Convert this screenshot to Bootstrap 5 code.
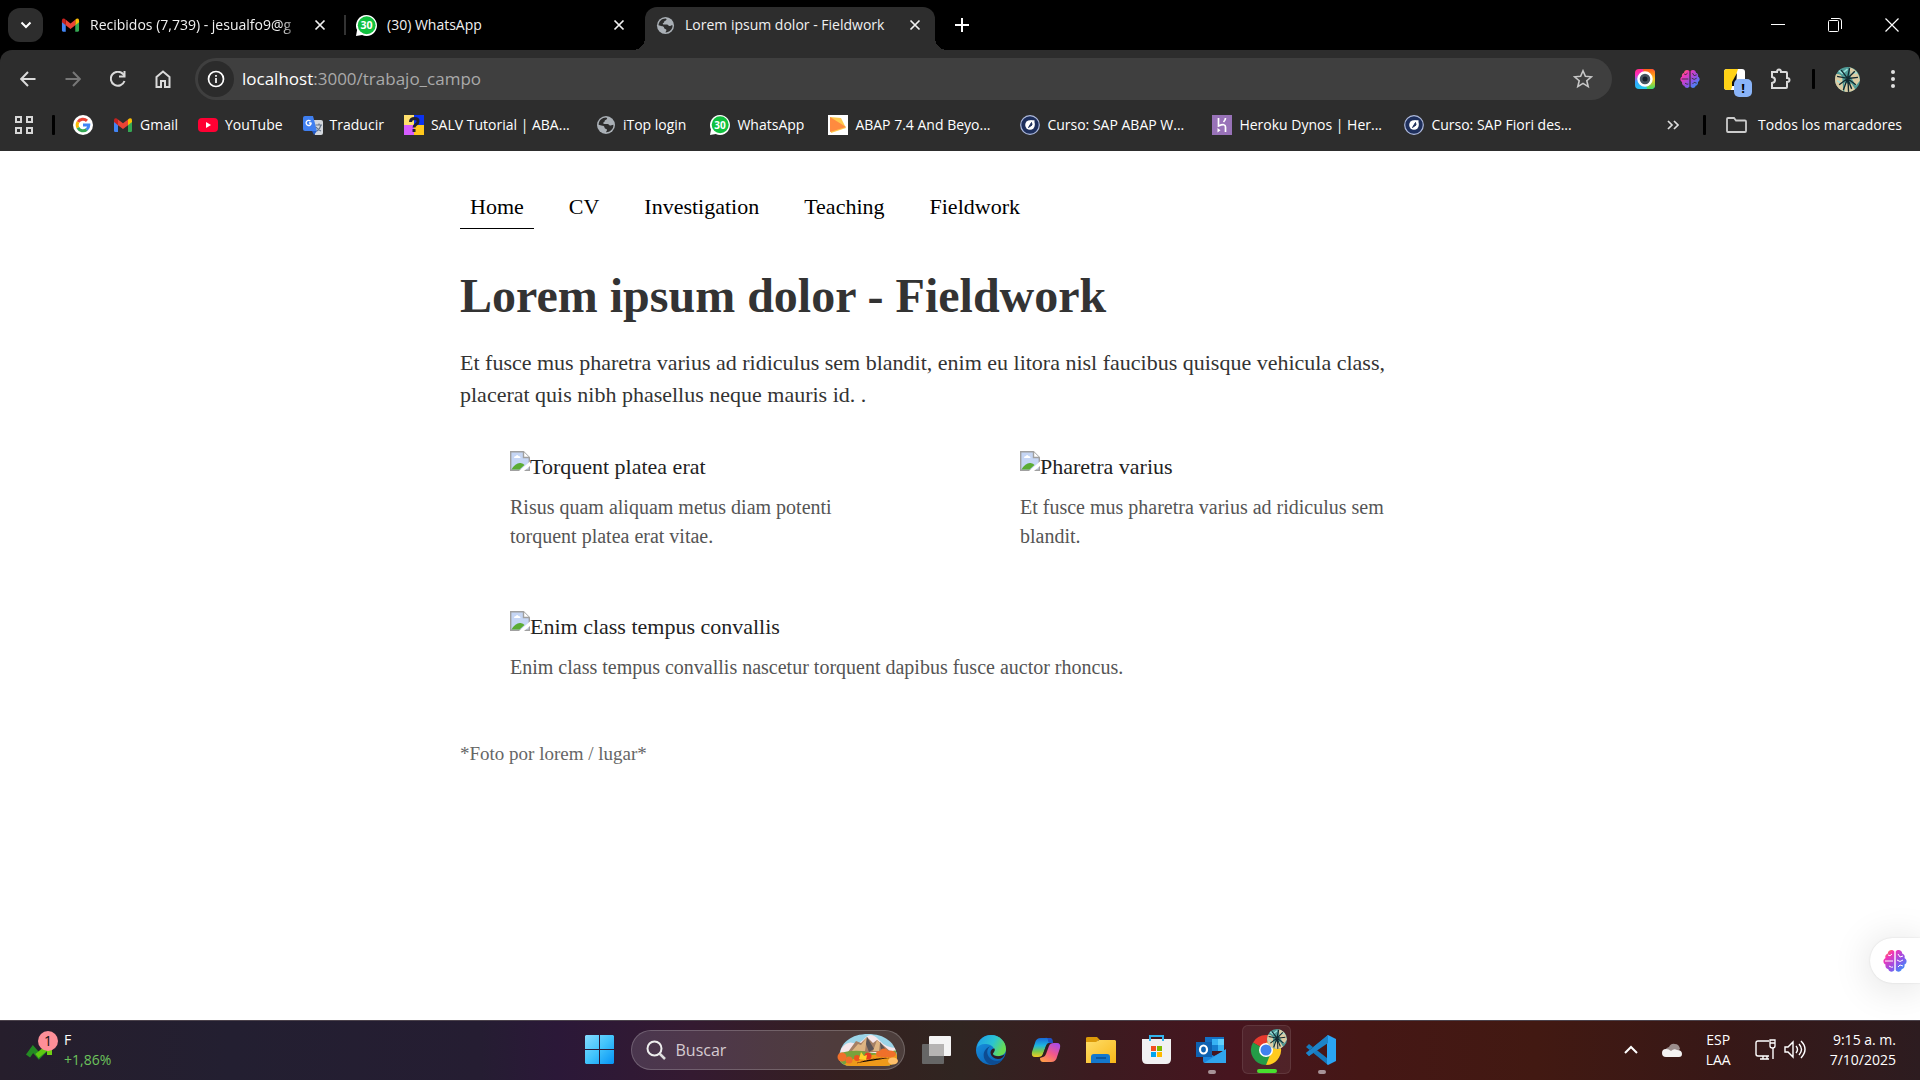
<!DOCTYPE html>
<html lang="es" data-bs-theme="light">
<head>
<meta charset="utf-8">
<meta name="viewport" content="width=device-width, initial-scale=1">
<title>Lorem ipsum dolor - Fieldwork</title>
<link href="https://cdn.jsdelivr.net/npm/bootstrap@5.3.0/dist/css/bootstrap.min.css" rel="stylesheet">
<style>
  body { font-family: "Open Sans", "Noto Sans", sans-serif; font-size: 14px; line-height: 20px; background: #fff; }
  svg { display: block; flex: none; }
  .plain { border: 0; background: none; padding: 0; color: inherit; display: flex; align-items: center; justify-content: center; flex: none; }

  /* browser window */
  .tabstrip { height: 50px; background: #000; color: #f1f1f1; }
  .tab-search { width: 35px; height: 34px; border-radius: 12px; background: #2d2d2d; margin: 0 8px; }
  .tab-item { width: 293px; height: 36px; padding: 0 14px 0 10px; gap: 10px; }
  .tab-item a { color: inherit; }
  .tab-divider { width: 2px; height: 20px; background: #333; }
  .tab-fade { -webkit-mask-image: linear-gradient(90deg, #000 190px, transparent 212px); mask-image: linear-gradient(90deg, #000 190px, transparent 212px); }
  .tab-current { width: 290px; height: 43px; padding-bottom: 7px; padding-left: 11px; margin-left: 6px; background: #2d2d2d; border-radius: 12px 12px 0 0; position: relative; align-self: flex-end; }
  .tab-current::before, .tab-current::after { content: ""; position: absolute; bottom: 0; width: 12px; height: 12px; }
  .tab-current::before { left: -12px; background: radial-gradient(circle at 0 0, transparent 12px, #2d2d2d 12px); }
  .tab-current::after { right: -12px; background: radial-gradient(circle at 100% 0, transparent 12px, #2d2d2d 12px); }
  .win-btn { width: 57px; height: 50px; }

  .chrome-bars { background: #000; color: #fff; }
  .chrome-inner { background: #2d2d2d; border-radius: 12px 12px 0 0; }
  .toolbar-row { height: 58px; padding: 0 5px; }
  .tool-btn { width: 45px; height: 42px; color: #dadada; }
  .tool-btn.dim { color: #777; }
  .omnibox { height: 42px; border-radius: 21px; background: #3f3f3f; margin-left: 10px; padding: 0 19px 0 3px; }
  .site-info { width: 36px; height: 36px; border-radius: 50%; background: #2b2b2b; }
  .url { font-size: 17px; color: #aaa; background: none; border: 0; outline: 0; }
  .url b { font-weight: 400; color: #fff; }
  .extensions { margin-left: 10px; }
  .bar-divider { width: 3px; height: 20px; background: #000; border-radius: 1px; flex: none; }
  .extensions .bar-divider { margin: 0 10px; }
  .bookmarks { height: 43px; padding: 0 18px 9px 14px; }
  .bookmarks .bar-divider { margin: 0 18px; }
  .bookmarks a { color: #fff; text-decoration: none; white-space: nowrap; gap: 7px; display: flex; align-items: center; margin-right: 20px; }
  .bookmarks a.roomy-mark { margin-right: 24px; }
  .bookmarks a.wide-mark { width: 177px; margin-right: 15px; }
  .ext-badge { position: absolute; left: 22px; top: 21px; width: 18px; height: 18px; border-radius: 5px; background: #8ab4f8; color: #000; font-size: 13px; line-height: 18px; font-weight: 700; text-align: center; }

  /* site */
  .site { font-family: "Liberation Serif", serif; font-size: 22px; line-height: 32px; color: #333; padding-top: 35px; }
  .site-body { max-width: 1000px; margin: 0 auto; }
  .site-nav { gap: 25px; margin-bottom: 35px; }
  .site-nav a { color: #000; text-decoration: none; padding: 5px 10px; border-bottom: 1px solid transparent; }
  .site-nav a.here { border-color: #000; }
  .site h1 { font-size: 48px; line-height: 64px; font-weight: 700; margin-bottom: 19px; color: #333; }
  .gallery { display: grid; grid-template-columns: 1fr 1fr; gap: 20px; }
  .gallery figure { margin: 20px 50px; }
  .gallery figcaption { margin-top: 10px; font-size: 20px; line-height: 29px; color: #555; }
  .span-two { grid-column: span 2; }
  .alt { color: #222; }
  .credit { font-size: 19px; line-height: 27px; color: #666; margin-top: 38px; }
  .brain-tab { position: absolute; right: 0; bottom: 37px; width: 50px; height: 45px; border-radius: 23px 0 0 23px; background: #fff; box-shadow: 0 4px 40px rgba(0,0,0,.14), 0 0 2px rgba(0,0,0,.12); }

  /* taskbar */
  .taskbar { height: 60px; padding-bottom: 2px; color: #fff; border-top: 1px solid #4b424b;
    background: linear-gradient(90deg, #261e2c 0, #231f31 12%, #251d32 25%, #2b1838 29%, #341a31 36%, #35201f 44%, #302521 50%, #3c1b20 57%, #46151f 64%, #451715 71%, #421912 80%, #371817 90%, #2d1c20 100%); }
  .taskbar > .side { flex: 1 1 0; padding: 0 24px; }
  .count { position: absolute; left: 14px; top: -9px; width: 20px; height: 20px; border-radius: 50%; background: #fd8f98; color: #111; font-size: 14px; line-height: 20px; text-align: center; }
  .gain { color: #6cc35c; }
  .find { width: 274px; height: 40px; border: 1px solid rgba(255,255,255,.2); border-radius: 20px; background: rgba(255,255,255,.13); padding: 0 6px 0 14px; margin: 0 4px; }
  .find input { background: none; border: 0; outline: 0; color: #d5cbd1; font-size: 16px; min-width: 0; }
  .find input::placeholder { color: #d5cbd1; opacity: 1; }
  .app { width: 49px; height: 49px; margin: 0 3px; border-radius: 6px; position: relative; }
  .app.active { background: rgba(255,255,255,.06); border: 1px solid rgba(255,255,255,.09); }
  .app.open::after, .app.active::after { content: ""; position: absolute; bottom: 0; left: 21px; width: 8px; height: 4px; border-radius: 2px; background: #a79398; }
  .app.active::after { left: 14px; width: 20px; background: #48e02e; }
</style>
<script src="https://cdn.jsdelivr.net/npm/bootstrap@5.3.0/dist/js/bootstrap.bundle.min.js"></script>
</head>
<body class="vh-100 d-flex flex-column overflow-hidden">

<svg width="0" height="0" class="position-absolute" aria-hidden="true">
  <defs>
    <linearGradient id="gBrain" x1="0" y1="0" x2="1" y2="1"><stop offset="0" stop-color="#ffa318"/><stop offset=".25" stop-color="#f435b5"/><stop offset=".6" stop-color="#9052e8"/><stop offset="1" stop-color="#18a8ff"/></linearGradient>
    <linearGradient id="gWin" x1="0" y1="0" x2="1" y2="1"><stop offset="0" stop-color="#86dcff"/><stop offset=".5" stop-color="#41c3fb"/><stop offset="1" stop-color="#0593f5"/></linearGradient>
    <linearGradient id="gEdgeA" x1="0" y1="0" x2="1" y2=".4"><stop offset="0" stop-color="#1e9bea"/><stop offset=".6" stop-color="#2bc4d2"/><stop offset="1" stop-color="#66dd55"/></linearGradient>
    <linearGradient id="gEdgeB" x1="0" y1="0" x2=".7" y2="1"><stop offset="0" stop-color="#1a98e5"/><stop offset="1" stop-color="#0a5fb4"/></linearGradient>
    <linearGradient id="gCopA" x1="0" y1="0" x2="0" y2="1"><stop offset="0" stop-color="#1669d8"/><stop offset=".4" stop-color="#1eb4e0"/><stop offset=".7" stop-color="#79c94c"/><stop offset="1" stop-color="#f5cb24"/></linearGradient>
    <linearGradient id="gCopB" x1=".8" y1="0" x2=".2" y2="1"><stop offset="0" stop-color="#a84bea"/><stop offset=".5" stop-color="#f2588a"/><stop offset="1" stop-color="#ff9c47"/></linearGradient>
    <linearGradient id="gFold" x1="0" y1="0" x2="1" y2="1"><stop offset="0" stop-color="#ffdd68"/><stop offset="1" stop-color="#f8b718"/></linearGradient>
    <linearGradient id="gRain" x1="0" y1="0" x2=".3" y2="1"><stop offset="0" stop-color="#ff2b7c"/><stop offset=".3" stop-color="#ff2bc1"/><stop offset=".6" stop-color="#33a5ff"/><stop offset="1" stop-color="#22c8ee"/></linearGradient>
    <linearGradient id="gRain2" x1="0" y1="0" x2="0" y2="1"><stop offset="0" stop-color="#ff5a1c"/><stop offset=".5" stop-color="#ffc41c"/><stop offset="1" stop-color="#3fdc62"/></linearGradient>
    <symbol id="gmail" viewBox="0 0 20 16"><path fill="#4285f4" d="M1 3.500v10.300Q1 15 2.200 15H5V7z"/><path fill="#34a853" d="M19 3.500v10.300Q19 15 17.800 15H15V7z"/><path fill="#fbbc04" d="M15 2.500 16.200 1.500Q19 .3 19 3.500V5l-4 3.200z"/><path fill="#ea4335" d="M5 2.500 10 6.300l5-3.800v5.700l-5 3.900-5-3.900z"/><path fill="#c5221f" d="M5 2.500 3.800 1.500Q1 .3 1 3.500V5l4 3.200z"/></symbol>
    <symbol id="whats" viewBox="0 0 20 20"><path fill="#fff" d="M10 0a10 10 0 1 1-4.200 19.100L0 20l1-5.600A10 10 0 0 1 10 0z"/><circle cx="10.200" cy="9.800" r="8.500" fill="#11c13f"/><text x="10" y="13.500" font-family="Open Sans, sans-serif" font-size="10" font-weight="700" fill="#fff" text-anchor="middle">30</text></symbol>
    <symbol id="globe" viewBox="0 0 20 20"><circle cx="10" cy="10" r="9" fill="#aab0b6"/><path fill="#2d2d2d" d="M10 2.500c2 .2 1 2-.5 2.500-1.500.6-.3 2-1.800 2.300-1 .3-.6 1.700.8 1.700h3c1.500 0 1.500 1.500 2.500 1.600 1.200.1 1.500-.8 3.400-.8.4 4.200-3.700 7.700-7.400 7.500.2-1.300 1.300-1.500.9-2.800-.4-1-2.400-.5-2.400-2.100 0-1.200-.9-1.700-2.200-1.700L2.600 9.800C2.800 5.500 6 2.500 10 2.500z"/><circle cx="14" cy="6.800" r="2.200" fill="#aab0b6"/></symbol>
    <symbol id="curso" viewBox="0 0 20 20"><circle cx="10" cy="10" r="9.300" fill="#1e2f5c" stroke="#aebadd" stroke-width="1.200"/><circle cx="10" cy="10" r="4.800" fill="#fff"/><path d="M10 5.200h4.500V10z" fill="#fff"/><path d="M8.500 12.500 11.500 7.500 12 10z" fill="#1e2f5c" stroke="#1e2f5c"/></symbol>
    <symbol id="brain" viewBox="0 0 24 24"><path fill="url(#gBrain)" d="M11.300 2.500C9-.3 4.700 1.400 4.800 4.500 2 5.500 2 8 2.500 9c-3 1.500-2.500 5.500 0 6.500-.5 3 1 4.500 2.700 4.500.8 3.300 5 3.500 6.100 1zM12.700 2.500C15-.3 19.300 1.400 19.200 4.500 22 5.500 22 8 21.500 9c3 1.500 2.500 5.500 0 6.500.5 3-1 4.500-2.700 4.500-.8 3.300-5 3.500-6.100 1z"/><path d="M5 6q2 2 4-1M2 12h8M6 17q3 2 4 1M15 5l2 3 3-1M14 11q3 3 6 0M15 18l2-2 3 1" fill="none" stroke="currentColor"/></symbol>
    <symbol id="broken" viewBox="0 0 20 20"><path d="M.7.7h12.800l5.800 5.800v12.800H.7z" fill="#c5d6f5" stroke="#a0a0a0" stroke-width="1.400"/><path d="M13.500.7v5.800h5.800" fill="#fff" stroke="#a0a0a0" stroke-width="1.400"/><path d="M4 7q0-2 2-2 1-2 2.500 0 2 0 2 2z" fill="#fff"/><path d="M1.500 18.500q4-7 9-6.500 3 .5 4 2l-5 4.500z" fill="#5aac34"/><path d="M20 10.500v4.500L14 20H9z" fill="#fff"/></symbol>
    <symbol id="close" viewBox="0 0 12 12"><path d="M1.500 1.500l9 9m0-9l-9 9" stroke="currentColor" stroke-width="1.700"/></symbol>
    <clipPath id="cRound"><circle cx="12" cy="12" r="12"/></clipPath>
    <symbol id="palm" viewBox="0 0 24 24"><g clip-path="url(#cRound)"><path d="M0 0h24v24H0z" fill="#4f9c98"/><path d="M0 7q5-1 7 3l1 14H0zM14 0q9 3 10 13l-4 5-5-9zM9 15l7 1 5 8H9z" fill="#dccca4"/><path d="M3 3l4 3 5-4M17 5l4 1M2 13l3 2" stroke="#9be0da" stroke-width="1.500" fill="none"/><path d="M13 24q0-7-1-12M12 11 2 9m10 2L6 3m6 8 2-10m-2 10 7-7m-7 7 10-1m-10 1 8 6m-8-6-8 6m8-6 4 10m-4-10-4 11" fill="none" stroke="#132a31" stroke-width="1.300"/></g></symbol>
  </defs>
</svg>

<header>
  <div class="tabstrip d-flex align-items-center">
    <button class="plain tab-search" aria-label="Buscar pestañas"><svg width="12" height="8" viewBox="0 0 12 8"><path d="M1.500 1.500 6 6l4.500-4.500" fill="none" stroke="#fff" stroke-width="2"/></svg></button>
    <div class="tab-item d-flex align-items-center">
      <svg width="19" height="16"><use href="#gmail"/></svg>
      <a href="#" class="flex-grow-1 text-decoration-none text-nowrap tab-fade">Recibidos (7,739) - jesualfo9@g</a>
      <button class="plain me-1" aria-label="Cerrar"><svg width="12" height="12"><use href="#close"/></svg></button>
    </div>
    <div class="tab-divider"></div>
    <div class="tab-item d-flex align-items-center">
      <svg width="21" height="21"><use href="#whats"/></svg>
      <a href="#" class="flex-grow-1 text-decoration-none text-nowrap">(30) WhatsApp</a>
      <button class="plain" aria-label="Cerrar"><svg width="12" height="12"><use href="#close"/></svg></button>
    </div>
    <div class="tab-item tab-current d-flex align-items-center">
      <svg width="19" height="19"><use href="#globe"/></svg>
      <a href="#" class="flex-grow-1 text-decoration-none text-nowrap">Lorem ipsum dolor - Fieldwork</a>
      <button class="plain" aria-label="Cerrar"><svg width="12" height="12"><use href="#close"/></svg></button>
    </div>
    <button class="plain ms-3 px-1" aria-label="Nueva pestaña"><svg width="14" height="14" viewBox="0 0 14 14"><path d="M7 0v14M0 7h14" stroke="#fff" stroke-width="2"/></svg></button>
    <div class="ms-auto d-flex">
      <button class="plain win-btn" aria-label="Minimizar"><svg width="14" height="14" viewBox="0 0 14 14"><path d="M0 6.500h14" stroke="#fff"/></svg></button>
      <button class="plain win-btn" aria-label="Restaurar"><svg width="14" height="14" viewBox="0 0 14 14"><rect x=".5" y="2.500" width="10" height="11" rx="1" fill="none" stroke="#fff"/><path d="M3 .5h8q2.500 0 2.500 2.500v8" fill="none" stroke="#fff"/></svg></button>
      <button class="plain win-btn" aria-label="Cerrar ventana"><svg width="14" height="14" viewBox="0 0 14 14"><path d="M.5.500l13 13m0-13l-13 13" stroke="#fff" stroke-width="1.200"/></svg></button>
    </div>
  </div>

  <div class="chrome-bars"><div class="chrome-inner">
    <div class="toolbar-row d-flex align-items-center">
      <button class="plain tool-btn" aria-label="Atrás"><svg width="16" height="16" viewBox="0 0 16 16"><path d="M15.500 8H1.500M8 1 1.200 8 8 15" fill="none" stroke="currentColor" stroke-width="2"/></svg></button>
      <button class="plain tool-btn dim" aria-label="Adelante"><svg width="16" height="16" viewBox="0 0 16 16"><path d="M.5 8h14M8 1l6.800 7L8 15" fill="none" stroke="currentColor" stroke-width="2"/></svg></button>
      <button class="plain tool-btn" aria-label="Recargar"><svg width="16" height="16" viewBox="0 0 16 16"><path d="M14.500 10A7 7 0 1 1 13 3l1.500 2" fill="none" stroke="currentColor" stroke-width="2"/><path d="M15.500 0v6.500H9v-2h4.500V0z" fill="currentColor"/></svg></button>
      <button class="plain tool-btn" aria-label="Inicio"><svg width="16" height="18" viewBox="0 0 16 18"><path d="M1.500 17V7L8 1.500 14.500 7v10H10v-6H6v6z" fill="none" stroke="currentColor" stroke-width="2"/></svg></button>
      <div class="omnibox flex-grow-1 d-flex align-items-center">
        <button class="plain site-info" aria-label="Información del sitio"><svg width="18" height="18" viewBox="0 0 18 18"><circle cx="9" cy="9" r="7.500" fill="none" stroke="#fff" stroke-width="1.700"/><path d="M9 8v5M9 5v1.800" stroke="#fff" stroke-width="1.700"/></svg></button>
        <div class="url flex-grow-1 ms-2" role="textbox" aria-label="Dirección"><b>localhost</b>:3000/trabajo_campo</div>
        <button class="plain" aria-label="Marcador"><svg width="20" height="20" viewBox="0 0 20 20"><path d="m10 1.800 2.400 5.500 6 .5-4.600 3.900 1.400 5.900-5.200-3.200-5.200 3.200 1.400-5.900L1.600 7.800l6-.5z" fill="none" stroke="#c7c7c7" stroke-width="1.600"/></svg></button>
      </div>
      <div class="extensions d-flex align-items-center">
        <button class="plain tool-btn" aria-label="Captura"><svg width="22" height="22" viewBox="0 0 22 22"><rect x="1" y="1" width="20" height="20" rx="4" fill="url(#gRain)"/><path d="M9 1h8q4 0 4 4v12q0 4-4 4h-4z" fill="url(#gRain2)"/><circle cx="11" cy="11" r="6.500" fill="#46545f" stroke="#fff" stroke-width="2.500"/><circle cx="11" cy="11" r="2.500" fill="#16212b"/></svg></button>
        <button class="plain tool-btn" aria-label="Asistente"><svg width="20" height="20" color="#2d2d2d"><use href="#brain"/></svg></button>
        <button class="plain tool-btn position-relative" aria-label="Extensión"><svg width="21" height="21" viewBox="0 0 21 21"><rect width="21" height="21" rx="3" fill="#fff"/><path d="M3 0h11L7 21H3q-3 0-3-3V3q0-3 3-3z" fill="#ffd217"/><path d="M13 4 8 13v4h4z" fill="#111"/></svg><span class="ext-badge">!</span></button>
        <button class="plain tool-btn" aria-label="Extensiones"><svg width="22" height="22" viewBox="0 0 22 22"><path d="M3 4h5q0-2.500 2-2.500T12 4h5q1 0 1 1v5q2.500 0 2.500 2T18 14v5q0 1-1 1H3v-5q3-.5 3-3T3 9z" fill="none" stroke="#dadada" stroke-width="2"/></svg></button>
        <div class="bar-divider"></div>
        <button class="plain tool-btn" aria-label="Perfil"><svg width="25" height="25"><use href="#palm"/></svg></button>
        <button class="plain tool-btn" aria-label="Menú"><svg width="4" height="18" viewBox="0 0 4 18"><g fill="#e0e0e0"><circle cx="2" cy="2" r="2"/><circle cx="2" cy="9" r="2"/><circle cx="2" cy="16" r="2"/></g></svg></button>
      </div>
    </div>

    <nav class="bookmarks d-flex align-items-center" aria-label="Marcadores">
      <button class="plain" aria-label="Aplicaciones"><svg width="20" height="20" viewBox="0 0 20 20"><path d="M2 2h5v5H2zM13 2h5v5h-5zM2 13h5v5H2zM13 13h5v5h-5z" fill="none" stroke="#d6d6d6" stroke-width="2"/></svg></button>
      <div class="bar-divider"></div>
      <a href="#" aria-label="Google"><svg width="20" height="20" viewBox="0 0 20 20"><circle cx="10" cy="10" r="10" fill="#fff"/><g fill="none" stroke-width="3"><path d="M5 7A5.800 5.800 0 0 1 14 5.800" stroke="#ea4335"/><path d="M4.900 12.800A5.800 5.800 0 0 1 5 7.100" stroke="#fbbc05"/><path d="M13.700 14.500A5.800 5.800 0 0 1 4.900 12.700" stroke="#34a853"/><path d="M10 10h5.800a5.800 5.800 0 0 1-2.200 4.600" stroke="#4285f4"/></g></svg></a>
      <a href="#"><svg width="20" height="16"><use href="#gmail"/></svg>Gmail</a>
      <a href="#"><svg width="20" height="14" viewBox="0 0 20 14"><rect width="20" height="14" rx="4" fill="#ff0033"/><path d="M8 4l5 3-5 3z" fill="#fff"/></svg>YouTube</a>
      <a href="#"><svg width="20" height="20" viewBox="0 0 20 20"><path d="M7 5h11q2 0 2 2v11q0 2-2 2h-6z" fill="#d3d7dd"/><path d="M2 1h8l4 15H2q-2 0-2-2V3q0-2 2-2z" fill="#3f7ff0"/><path d="M9 16h5l-3 4z" fill="#245ac5"/><path d="M8.500 8H6m2.300.2A2.600 2.600 0 1 1 7.500 6" fill="none" stroke="#fff" stroke-width="1.300"/><path d="M12.500 10H19m-3-1.500V10m2 0q-1 4-4 6m-1-4q2 3 5 4" fill="none" stroke="#64748a" stroke-width="1.200"/></svg>Traducir</a>
      <a href="#" class="wide-mark"><svg width="20" height="20" viewBox="0 0 20 20"><path fill="#ffe06d" d="M0 0h11v10H0z"/><path fill="#0b32f2" d="M10 0h10v10H10z"/><path fill="#d55cff" d="M0 10h10v10H0z"/><path fill="#ffc81c" d="M10 10h10v10H10z"/><path d="M6.500 7q0-3.500 4-3.500T14 6.500c0 3-4 2.500-4 6" fill="none" stroke="#202031" stroke-width="3"/><path fill="#202031" d="M8.500 14h3v3h-3z"/></svg>SALV Tutorial | ABA...</a>
      <a href="#" class="roomy-mark"><svg width="20" height="20"><use href="#globe"/></svg>iTop login</a>
      <a href="#" class="roomy-mark"><svg width="20" height="20"><use href="#whats"/></svg>WhatsApp</a>
      <a href="#" class="wide-mark"><svg width="20" height="20" viewBox="0 0 20 20"><path fill="#fff" d="M0 0h20v20H0z"/><path d="M2 2 13 3 18 13 3 18z" fill="#ffc94d"/><path d="M2 2 18 12 2 17z" fill="#ff8b3f"/></svg>ABAP 7.4 And Beyo...</a>
      <a href="#" class="wide-mark"><svg width="20" height="20"><use href="#curso"/></svg>Curso: SAP ABAP W...</a>
      <a href="#" class="wide-mark"><svg width="20" height="20" viewBox="0 0 20 20"><path fill="#9872b8" d="M0 0h20v20H0z"/><path d="M6.500 3v8q7-3 7 1v5M13.500 3q0 2-2 4" fill="none" stroke="#fff" stroke-width="1.700"/><path d="M5.500 13l3 2.200-3 2.200z" fill="#fff"/></svg>Heroku Dynos | Her...</a>
      <a href="#" class="wide-mark"><svg width="20" height="20"><use href="#curso"/></svg>Curso: SAP Fiori des...</a>
      <button class="plain ms-auto" aria-label="Más marcadores"><svg width="12" height="10" viewBox="0 0 12 10"><path d="M1 1l4 4-4 4M7 1l4 4-4 4" fill="none" stroke="#ddd" stroke-width="1.700"/></svg></button>
      <div class="bar-divider mx-0 ms-4"></div>
      <a href="#" class="ms-3 me-0"><svg class="ms-1" width="21" height="16" viewBox="0 0 21 16"><path d="M1 2q0-1 1-1h6l2 2.500h9q1 0 1 1V14q0 1-1 1H2q-1 0-1-1z" fill="none" stroke="#ccc" stroke-width="1.800"/></svg><span class="ps-1">Todos los marcadores</span></a>
    </nav>
  </div></div>
</header>

<main class="site flex-grow-1 position-relative">
  <div class="site-body">
    <nav class="site-nav d-flex" aria-label="Principal">
      <a class="here" href="#">Home</a>
      <a href="#">CV</a>
      <a href="#">Investigation</a>
      <a href="#">Teaching</a>
      <a href="#">Fieldwork</a>
    </nav>
    <h1>Lorem ipsum dolor - Fieldwork</h1>
    <p class="mb-0">Et fusce mus pharetra varius ad ridiculus sem blandit, enim eu litora nisl faucibus quisque vehicula class,<br>placerat quis nibh phasellus neque mauris id. .</p>
    <div class="gallery pt-3 mt-1">
      <figure>
        <div class="alt d-flex"><svg width="20" height="20"><use href="#broken"/></svg>Torquent platea erat</div>
        <figcaption>Risus quam aliquam metus diam potenti<br>torquent platea erat vitae.</figcaption>
      </figure>
      <figure>
        <div class="alt d-flex"><svg width="20" height="20"><use href="#broken"/></svg>Pharetra varius</div>
        <figcaption>Et fusce mus pharetra varius ad ridiculus sem<br>blandit.</figcaption>
      </figure>
      <figure class="span-two">
        <div class="alt d-flex"><svg width="20" height="20"><use href="#broken"/></svg>Enim class tempus convallis</div>
        <figcaption>Enim class tempus convallis nascetur torquent dapibus fusce auctor rhoncus.</figcaption>
      </figure>
    </div>
    <p class="credit">*Foto por lorem / lugar*</p>
  </div>
  <button class="plain brain-tab" aria-label="Asistente"><svg width="24" height="24" color="#fff"><use href="#brain"/></svg></button>
</main>

<footer class="taskbar d-flex align-items-center">
  <div class="side d-flex align-items-center">
    <div class="position-relative me-2"><svg width="32" height="20" viewBox="0 0 32 20"><path d="M4 16 9 9l6 7 10-10" fill="none" stroke="#248b23" stroke-width="5"/><path d="M13 16 25 6" stroke="#5fc812" stroke-width="5"/><path d="M17 3h11v12h-5V8z" fill="#6fd112"/></svg><span class="count">1</span></div>
    <div>F<br><span class="gain">+1,86%</span></div>
  </div>

  <div class="d-flex align-items-center flex-shrink-0">
    <button class="plain app" aria-label="Inicio"><svg width="29" height="29" viewBox="0 0 29 29"><path fill="url(#gWin)" d="M1 0h13v14H0V1zM15 0h13l1 1v13H15zM0 15h14v14H1l-1-1zM15 15h14v13l-1 1H15z"/></svg></button>
    <label class="find d-flex align-items-center"><svg width="20" height="20" viewBox="0 0 20 20"><circle cx="8.500" cy="8.500" r="7" fill="none" stroke="#eee" stroke-width="2"/><path d="m13.500 13.500 5.500 5.500" stroke="#ddd" stroke-width="2.500"/></svg>
      <input class="flex-grow-1 ms-2" type="search" placeholder="Buscar" aria-label="Buscar">
      <svg width="61" height="33" viewBox="0 0 61 33"><defs><clipPath id="cHill"><path d="M2 26C2 9 15 1 31 1s29 8 29 25q-3 7-12 7H14Q4 33 2 26z"/></clipPath></defs><g clip-path="url(#cHill)"><path d="M0 0h61v33H0z" fill="#9bd4e8"/><path d="M4 16q6-8 12-6t12-5 14 2 20 8v8H3z" fill="#f6e6ea"/><path d="m11 19 8-11 5 2 6-6 6 6 4-3 6 5 8 7z" fill="#a58065"/><path d="m24 12 6-8-2 14H15l6-7zm16-5 3 3-1 8h-6z" fill="#deb583"/><path d="m30 4 7 12-5 3-3-8zm13 5 7 9h-6z" fill="#5c5557"/><path d="M3 20q15-4 27-1t30-2v16H0z" fill="#78a23c"/><path d="M6 33q10-13 55-12v12z" fill="#ee9a1a"/><path d="M20 30q14-5 32-5" stroke="#974a14" stroke-dasharray="2 2"/></g><g fill="#f0702a"><circle cx="5" cy="24" r="4.500"/><circle cx="12" cy="27" r="3.500"/><circle cx="47" cy="20" r="4.500"/><ellipse cx="53" cy="21" rx="6" ry="3.500"/><circle cx="42" cy="21" r="3"/></g><circle cx="31" cy="23" r="3.500" fill="#e63c20"/><circle cx="20" cy="25" r="3" fill="#e9531d"/><path d="m22 26 2-7 3 4 3-1-1 5z" fill="#ffd329"/><ellipse cx="56" cy="28" rx="5" ry="3.500" fill="#ffc06a"/></svg>
    </label>
    <button class="plain app" aria-label="Vista de tareas"><svg width="29" height="28" viewBox="0 0 29 28"><rect x="7" width="22" height="20" rx="1" fill="#f4f4f4"/><rect y="8" width="22" height="20" rx="1" fill="#666"/><path d="M7 8h15v12H7z" fill="#b6b4b3"/></svg></button>
    <button class="plain app" aria-label="Edge"><svg width="30" height="30" viewBox="0 0 30 30"><circle cx="15" cy="15" r="15" fill="url(#gEdgeB)"/><path d="M1 13C2 5 8 0 15 0c9 0 15 7 15 14 0 5-4 7-8 7-3 0-5-1-5-2 0-2 2-2 1-5-1-4-6-5-9-5-4 0-7 2-8 4z" fill="url(#gEdgeA)"/><path d="M15 11c-4 2-5 7-2 11s8 5 13 3c-5 7-14 6-17 0-3-5-1-12 6-14z" fill="#0d4c92"/><path d="M18.500 13.500c1 3-1.500 4-1.500 5.500 0 1 2 2.200 5 2.200 3 0 5.500-.9 6.500-1.700-1 2.700-3 4.500-6.500 4.500-4 0-7.500-3-7.500-6.500 0-2 1.500-4 4-4z" fill="#2f1c20"/></svg></button>
    <button class="plain app" aria-label="Copilot"><svg width="30" height="28" viewBox="0 0 30 28"><path d="M10 2h8q3 0 3 4l-3 1q-2 0-3 3l-3 8q-1 3-5 3H4q-4 0-3-5l3-9q1-5 6-5z" fill="url(#gCopA)"/><path d="M20 26h-8q-3 0-3-4l3-1q2 0 3-3l3-8q1-3 5-3h3q4 0 3 5l-3 9q-1 5-6 5z" fill="url(#gCopB)"/><path d="M15 10q1-3 4-3-1 0-2 3l-3 8q-1 3-4 3 1 0 2-3z" fill="#2f2020"/><path d="M14 2h5q3 0 3 5h-3q-2 0-2-3t-3-2z" fill="#2051c4"/></svg></button>
    <button class="plain app" aria-label="Explorador"><svg width="30" height="27" viewBox="0 0 30 27"><path d="M0 2q0-1 2-1h9l3 3h-2v7H0z" fill="#dc9a09"/><path d="M0 6h10l3-2h16l1 1v22H0z" fill="url(#gFold)"/><path d="M5 27v-6q0-3 3-3h13q3 0 3 3v6z" fill="#1478cd"/><path d="M10 22h10" stroke="#0b4c8d" stroke-width="1.500"/></svg></button>
    <button class="plain app" aria-label="Tienda"><svg width="29" height="29" viewBox="0 0 29 29"><path d="M0 4h29v20q0 5-5 5H5q-5 0-5-5z" fill="#f1f1f2"/><path d="M8 6V1h13v5" fill="none" stroke="#32b5ee" stroke-width="2"/><path d="M9 11h5v5H9z" fill="#f25022"/><path d="M15 11h5v5h-5z" fill="#7fba00"/><path d="M9 17h5v5H9z" fill="#00a4ef"/><path d="M15 17h5v5h-5z" fill="#ffb900"/></svg></button>
    <button class="plain app open" aria-label="Outlook"><svg width="30" height="27" viewBox="0 0 30 27"><path fill="#1370c4" d="M9 1h19v14H9z"/><path fill="#37b3f4" d="M16 3h6v6h-6zM22 9h6v6h-6z"/><path fill="#61d0fb" d="M22 3h6v6h-6z"/><path fill="#167dce" d="M16 9h6v6h-6z"/><path d="M7 14 18 20 30 14v13H9q-2 0-2-2z" fill="#1b86dc"/><path d="M8 27 30 13v14z" fill="#30a5ed"/><path fill="#0f62b1" d="M0 6h16v15H0z"/><ellipse cx="7.500" cy="13.500" rx="3.500" ry="4" fill="none" stroke="#fff" stroke-width="2.200"/></svg></button>
    <button class="plain app active" aria-label="Chrome"><svg width="42" height="42" viewBox="0 0 42 42"><g transform="translate(6 6)"><path d="M15 15 2 7.500A15 15 0 0 1 28 7.500z" fill="#e63a2e"/><path d="M15 15 2 7.500A15 15 0 0 0 15 30l6.500-11.300z" fill="#249c47"/><path d="M15 15h6L15 30A15 15 0 0 0 28 7.500H15z" fill="#ffcb1f"/><circle cx="15" cy="15" r="7" fill="#fff"/><circle cx="15" cy="15" r="5.500" fill="#3f82ef"/></g><use href="#palm" x="22" y="0" width="20" height="20"/></svg></button>
    <button class="plain app open" aria-label="Visual Studio Code"><svg width="30" height="30" viewBox="0 0 30 30"><path d="M21 7 3 21l-3-3L22 0zM21 23 3 9l-3 3 22 18z" fill="#1679bd"/><path d="M22 0l8 4v22l-8 4-1-1V1z" fill="#2aa5f5"/><path d="M3 21 0 18 22 0v8z" fill="#1d84ca"/></svg></button>
  </div>

  <div class="side d-flex align-items-center justify-content-end">
    <button class="plain" aria-label="Iconos ocultos"><svg width="14" height="9" viewBox="0 0 14 9"><path d="M1 8l6-6 6 6" fill="none" stroke="#fff" stroke-width="2"/></svg></button>
    <svg class="ms-4" width="20" height="14" viewBox="0 0 20 14"><path d="M3 9q0-4 4-5 2-4 6-3 4 0 5 5L10 12z" fill="#9b8d8c"/><path d="M4 14q-4 0-4-4t4-4q3 0 5 2 3-3 6-1 5 0 5 4 0 3-3 3z" fill="#f4f2f2"/></svg>
    <div class="text-center ms-4 me-4">ESP<br>LAA</div>
    <svg width="21" height="21" viewBox="0 0 21 21"><path d="M14 2H3Q1 2 1 4v11q0 2 2 2h11M5 20h9M8 17v3m4-3v3M18 9v11" fill="none" stroke="#fff" stroke-width="1.400"/><path d="M15 1h5v6q0 2-2.500 2T15 7zM15 4h5" fill="none" stroke="#fff" stroke-width="1.300"/></svg>
    <svg class="ms-2" width="22" height="19" viewBox="0 0 22 19"><path d="M1 7h3l5-5v15l-5-5H1zM12 6q3 3.500 0 7M15 4q5 5.500 0 11M17 1q8 8 0 17" fill="none" stroke="#fff" stroke-width="1.400"/></svg>
    <div class="text-end ms-4">9:15 a. m.<br>7/10/2025</div>
  </div>
</footer>
</body>
</html>
